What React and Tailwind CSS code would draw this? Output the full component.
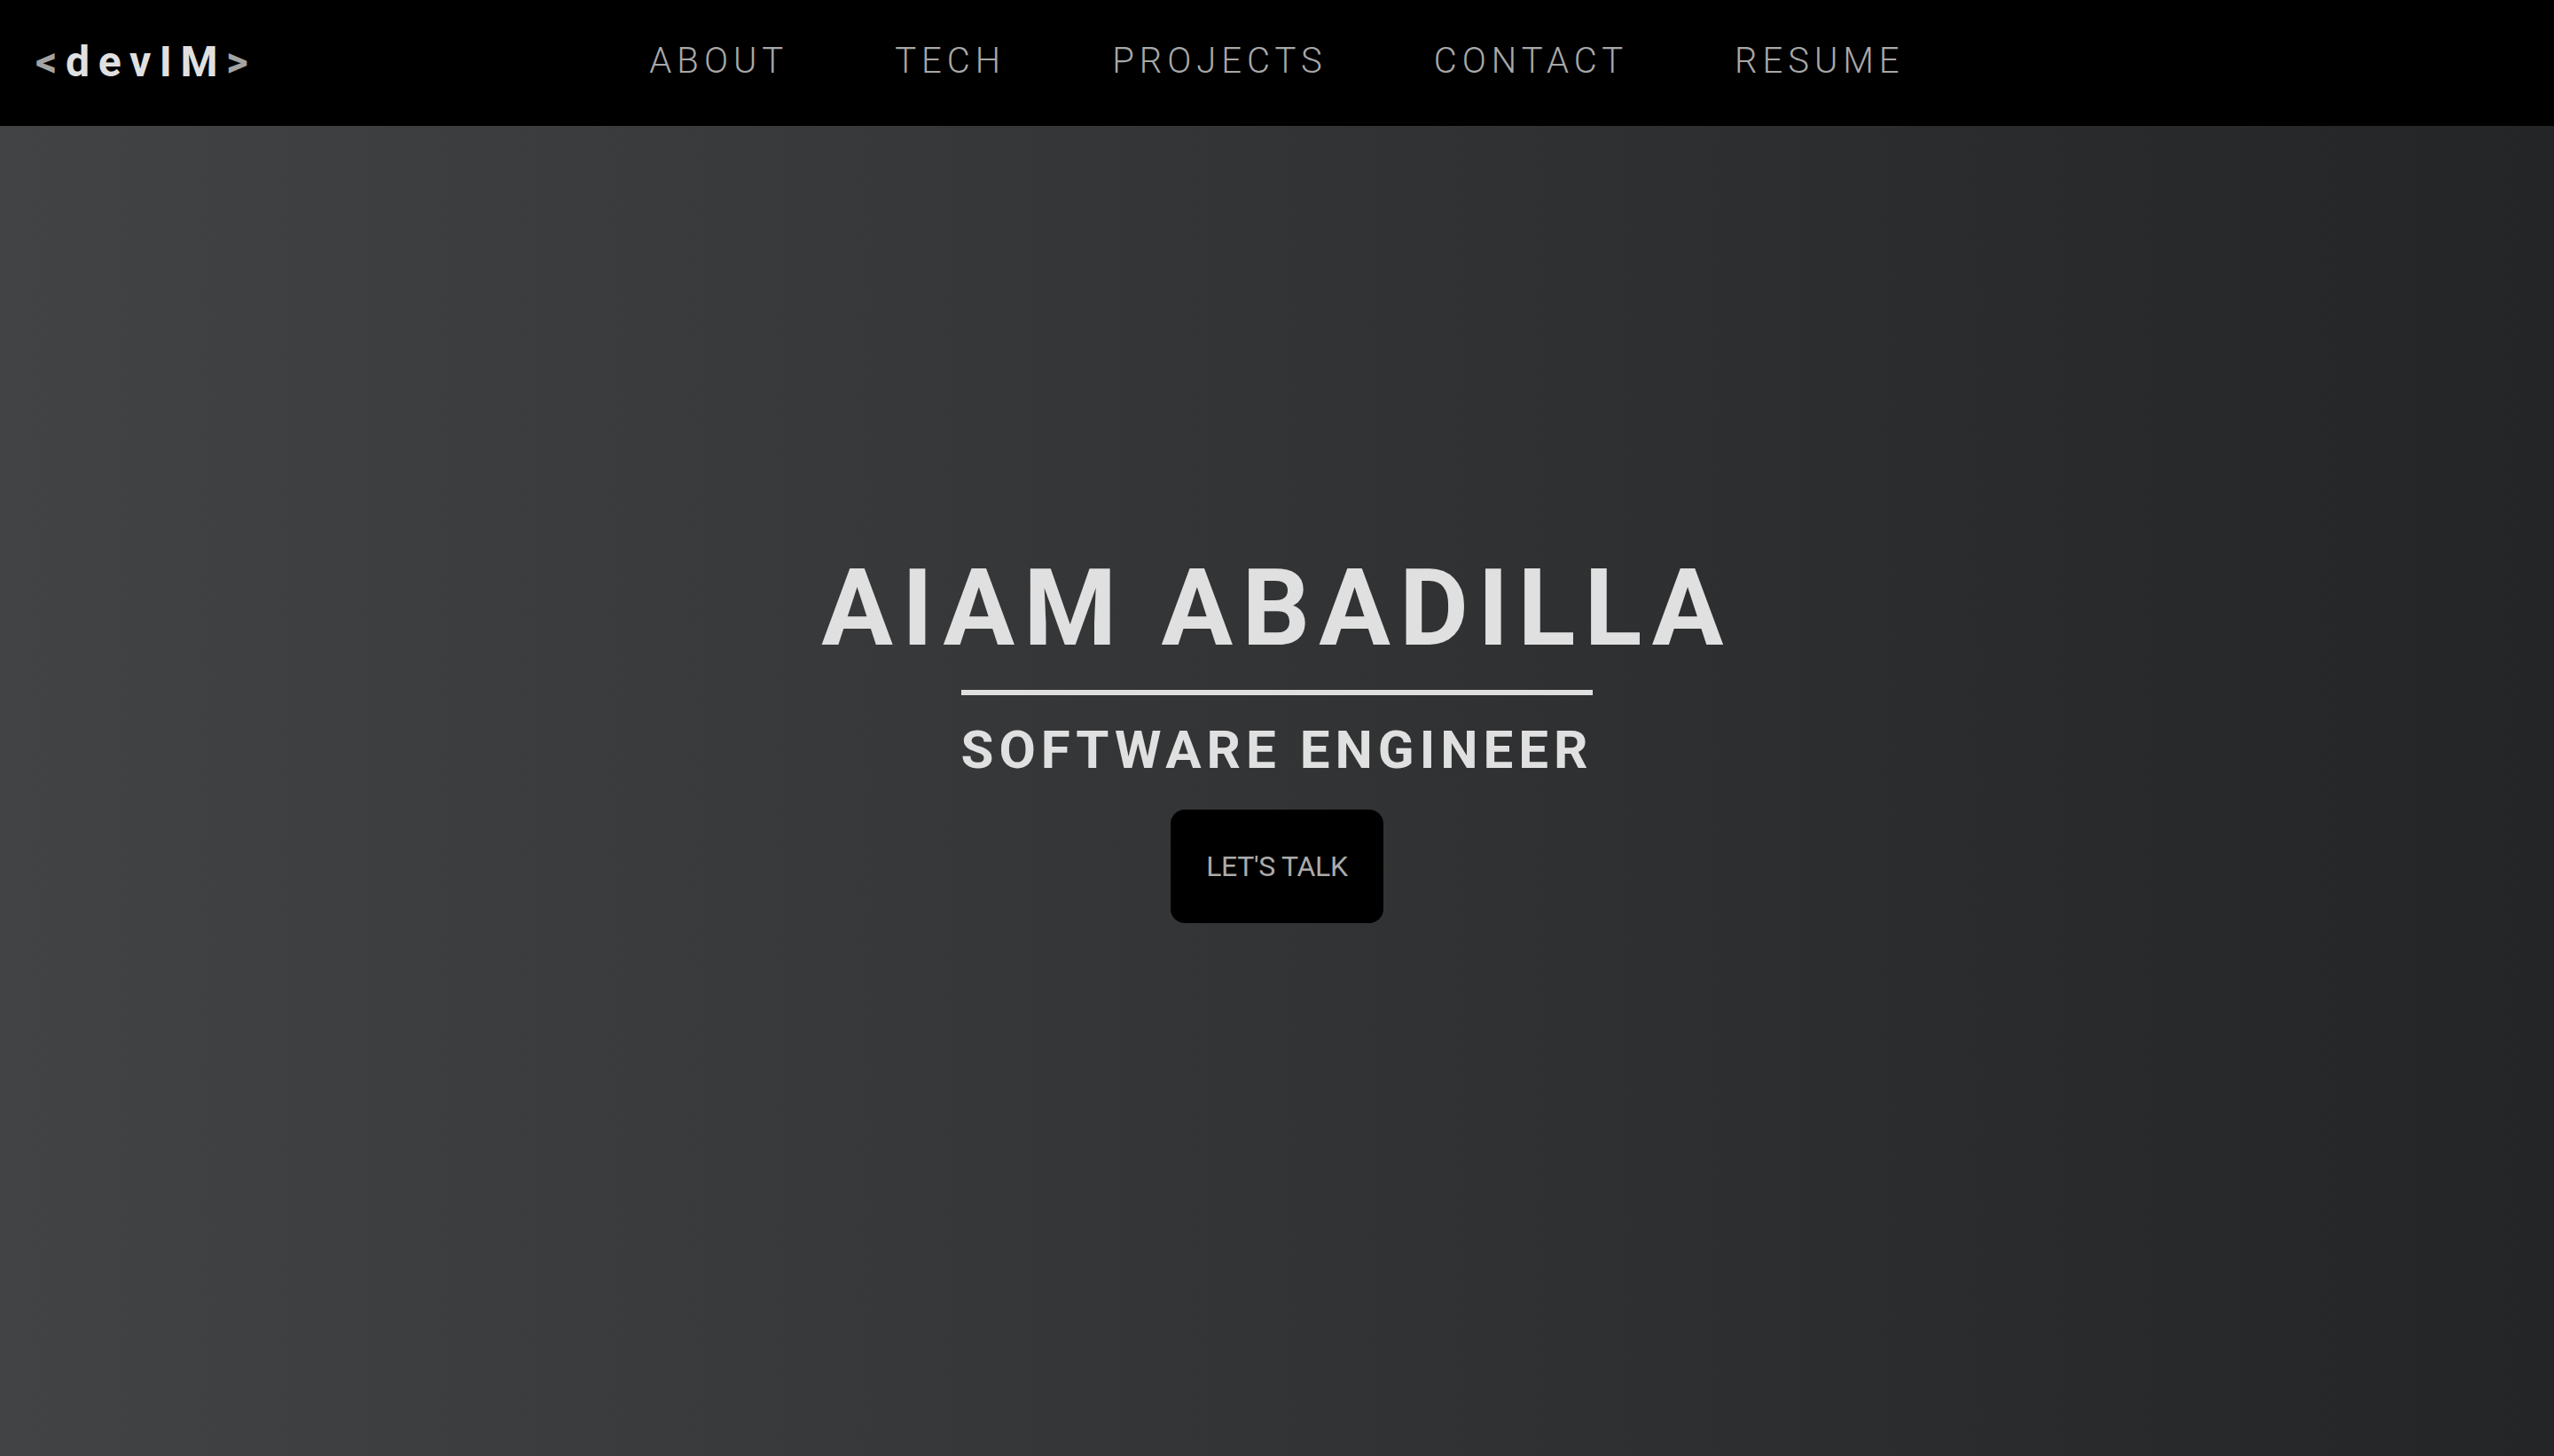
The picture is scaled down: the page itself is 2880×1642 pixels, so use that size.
import React from "react";

const links = ["ABOUT", "TECH", "PROJECTS", "CONTACT", "RESUME"];

const App = () => {
    return (
        <div className="min-h-screen w-full flex flex-col font-['Roboto',sans-serif]">
            {/* Nav */}
            <nav className="h-[142px] bg-black grid grid-cols-[1fr_auto_1fr] items-center px-[40px]">
                <a className="text-[48px] font-bold tracking-[0.2em] leading-none pb-[2px]">
                    <span className="text-[#a3a3a3]">&lt;</span>
                    <span className="text-[#e0e0e0]">devIM</span>
                    <span className="text-[#a3a3a3]">&gt;</span>
                </a>
                <ul className="flex items-center gap-[120px] pb-[4px]">
                    {links.map((l) => (
                        <li
                            key={l}
                            className="text-[40px] font-light tracking-[0.15em] text-[#a8a8a8] leading-none"
                        >
                            {l}
                        </li>
                    ))}
                </ul>
                <div />
            </nav>

            {/* Hero */}
            <main className="h-[1500px] bg-gradient-to-r from-[#414345] to-[#232526] flex flex-col items-center justify-center pb-[128px]">
                <h1 className="text-[120px] leading-[normal] font-bold tracking-[0.085em] text-[#e0e0e0]">
                    AIAM ABADILLA
                </h1>
                <h2 className="mt-[22px] border-t-[6px] border-[#e0e0e0] pt-[26px] text-[60px] leading-[normal] font-bold tracking-[0.1em] text-[#e0e0e0]">
                    SOFTWARE ENGINEER
                </h2>
                <button className="mt-[32px] w-[240px] h-[128px] rounded-2xl bg-black text-[32px] leading-[normal] tracking-[-0.01em] text-[#ababab]">
                    LET'S TALK
                </button>
            </main>
        </div>
    );
};

export default App;
